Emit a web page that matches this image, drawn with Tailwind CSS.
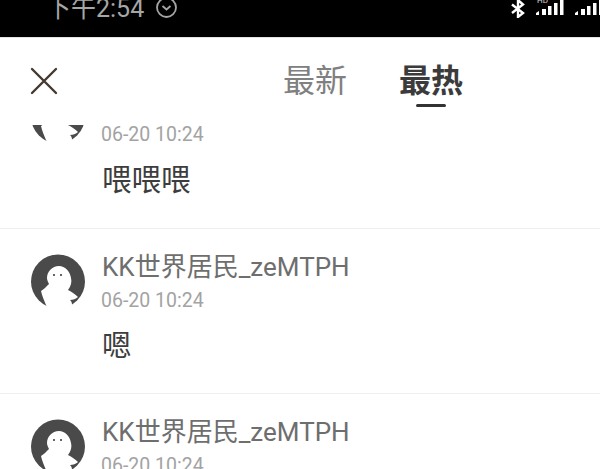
<!DOCTYPE html>
<html lang="en">
<head>
    <meta charset="UTF-8">
    <meta name="viewport" content="width=device-width, initial-scale=1.0">
    <title>评论</title>
    <script src="https://cdn.jsdelivr.net/npm/@tailwindcss/browser@4"></script>
</head>
<body class="bg-white font-['Roboto','Noto_Sans_CJK_SC',sans-serif]">
<div class="w-[600px] h-[469px] overflow-hidden flex flex-col">
    <!-- status bar -->
    <div class="h-[38px] shrink-0 bg-black border-b border-[#e4e4e4] overflow-hidden flex justify-between pl-[46px]">
        <div class="flex items-center gap-[11px] h-[16px] text-[#a6a6a6] text-[25px] leading-none">
            <span>下午2:54</span>
            <svg class="w-[23px] h-[23px] -mt-[1px]" viewBox="0 0 23 23" fill="none" stroke="#a6a6a6" stroke-width="1.800"><circle cx="11.500" cy="11.500" r="9.500"/><path d="M7.500 10l4 3.500 4-3.500"/></svg>
        </div>
        <div class="flex items-start">
            <svg class="w-[16px] h-[18px]" viewBox="0 0 16 18" fill="none" stroke="#fff" stroke-width="2.400"><path d="M2 4.500l11 8.500-5 4V0l5 4.500L2 13"/></svg>
            <svg class="w-[28px] h-[15px] ml-[10px]" viewBox="0 0 28 15" fill="#fff"><text x="1" y="3" font-size="8" fill="#cfcfcf">HD</text><path d="M0 15v-2l3-2v4zM6 15V9h4v6zM12 15V6h3.500v9zM18 15V3h3.500v12zM24 15V0h3.500v15z"/></svg>
            <svg class="w-[25px] h-[15px] ml-[11px]" viewBox="0 0 25 15" fill="#fff"><path d="M0 15v-2l3-2v4zM6 15V9h4v6zM12 15V6h3.500v9zM18 15V3h3.500v12zM24 15V0h1v15z"/></svg>
        </div>
    </div>

    <!-- tabs -->
    <div class="h-[87px] shrink-0 bg-white relative z-10 flex items-start">
        <svg class="w-[30px] h-[30px] ml-[29px] mt-[28px]" viewBox="0 0 30 30" fill="none" stroke="#45382e" stroke-width="2.400" stroke-linecap="round"><path d="M3 3l24 24M27 3L3 27"/></svg>
        <div class="flex gap-[52px] ml-[224px] mt-[24px] text-[32px] leading-[38px]">
            <span class="text-[#808080]">最新</span>
            <div class="flex flex-col items-center">
                <span class="text-[#3b3b3b] font-bold">最热</span>
                <div class="w-[30px] h-[3px] mt-[4px] rounded-full bg-[#333]"></div>
            </div>
        </div>
    </div>

    <!-- comments -->
    <div class="-mt-[61px] flex flex-col">
        <div class="h-[165px] border-b border-[#efefef] flex gap-[17px] pl-[31px] pt-[25px] shrink-0">
            <svg class="w-[54px] h-[55px] shrink-0" viewBox="0 0 54 55"><circle cx="27" cy="27.500" r="27" fill="#4a4a4a"/><path d="M28 12C21 12 16 18 16 24C16 26 17 28 18 30C15 33 13 35 10 37C11 42 13 46 15 51L17 55H38L41 51C41 48 40 47 39 46C42 46 45 45 47 43C44 40 41 38 37 36C40 32 41 28 40 24C39 17 34 12 28 12Z" fill="#fff"/><circle cx="23" cy="21" r="1" fill="#333"/><circle cx="30" cy="21" r="1" fill="#333"/></svg>
            <div class="min-w-0">
                <div class="text-[#6e6e6e] text-[26px] leading-[30px] -mt-[2px] whitespace-nowrap">KK世界居民_zeMTPH</div>
                <div class="text-[#a3a3a3] text-[19.500px] leading-[24px] mt-[6px] -ml-[1px]">06-20 10:24</div>
                <div class="text-[#3d3d3d] text-[29.500px] leading-[38px] mt-[14px]">喂喂喂</div>
            </div>
        </div>
        <div class="h-[165px] border-b border-[#efefef] flex gap-[17px] pl-[31px] pt-[25px] shrink-0">
            <svg class="w-[54px] h-[55px] shrink-0" viewBox="0 0 54 55"><circle cx="27" cy="27.500" r="27" fill="#4a4a4a"/><path d="M28 12C21 12 16 18 16 24C16 26 17 28 18 30C15 33 13 35 10 37C11 42 13 46 15 51L17 55H38L41 51C41 48 40 47 39 46C42 46 45 45 47 43C44 40 41 38 37 36C40 32 41 28 40 24C39 17 34 12 28 12Z" fill="#fff"/><circle cx="23" cy="21" r="1" fill="#333"/><circle cx="30" cy="21" r="1" fill="#333"/></svg>
            <div class="min-w-0">
                <div class="text-[#6e6e6e] text-[26px] leading-[30px] -mt-[2px] whitespace-nowrap">KK世界居民_zeMTPH</div>
                <div class="text-[#a3a3a3] text-[19.500px] leading-[24px] mt-[7px] -ml-[1px]">06-20 10:24</div>
                <div class="text-[#3d3d3d] text-[29.500px] leading-[38px] mt-[14px]">嗯</div>
            </div>
        </div>
        <div class="h-[165px] flex gap-[17px] pl-[31px] pt-[25px] shrink-0">
            <svg class="w-[54px] h-[55px] shrink-0" viewBox="0 0 54 55"><circle cx="27" cy="27.500" r="27" fill="#4a4a4a"/><path d="M28 12C21 12 16 18 16 24C16 26 17 28 18 30C15 33 13 35 10 37C11 42 13 46 15 51L17 55H38L41 51C41 48 40 47 39 46C42 46 45 45 47 43C44 40 41 38 37 36C40 32 41 28 40 24C39 17 34 12 28 12Z" fill="#fff"/><circle cx="23" cy="21" r="1" fill="#333"/><circle cx="30" cy="21" r="1" fill="#333"/></svg>
            <div class="min-w-0">
                <div class="text-[#6e6e6e] text-[26px] leading-[30px] -mt-[2px] whitespace-nowrap">KK世界居民_zeMTPH</div>
                <div class="text-[#a3a3a3] text-[19.500px] leading-[24px] mt-[7px] -ml-[1px]">06-20 10:24</div>
            </div>
        </div>
    </div>
</div>
</body>
</html>
